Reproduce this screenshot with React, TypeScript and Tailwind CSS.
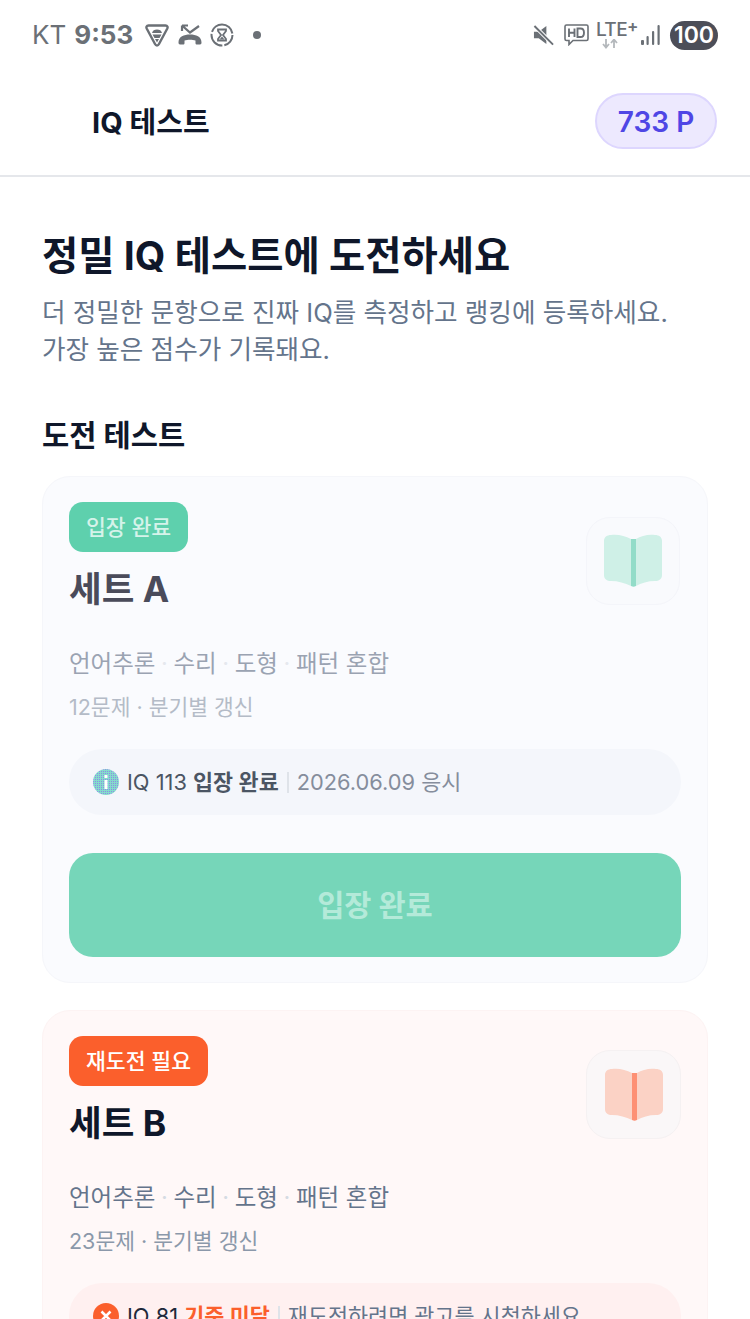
const font = { fontFamily: '"Inter", "Noto Sans CJK KR", sans-serif' }

const BookIcon = ({ page, spine }: { page: string; spine: string }) => (
  <svg width="58" height="54" viewBox="0 0 58 54">
    <path
      d="M7 1 C14 0 21 2 27 5 L27 52 C21 49 14 47 7 47 C3 47 0 45 0 41 L0 7 C0 3 3 1 7 1 Z"
      fill={page}
    />
    <path
      d="M51 1 C44 0 37 2 32 5 L32 52 C37 49 44 47 51 47 C55 47 58 45 58 41 L58 7 C58 3 55 1 51 1 Z"
      fill={page}
    />
    <path d="M27 5 L32 5 L32 52 C30 53 29 53 27 52 Z" fill={spine} />
  </svg>
)

const Dot = ({ color }: { color: string }) => <span className={`${color} mx-[-1px]`}>·</span>

const StatusBar = () => (
  <div className="h-[70px] flex items-center justify-between pl-[32px] pr-[32px] text-[#6b7076]">
    <div className="flex items-center">
      <span className="text-[26px] leading-none">KT</span>
      <span className="text-[26px] leading-none font-bold ml-[8px]">9:53</span>
      {/* vpn shield */}
      <svg className="ml-[12px]" width="24" height="23" viewBox="0 0 24 23" fill="none">
        <path d="M3.5 1.5 H20.5 C22.5 1.5 23 3 22.3 4.5 L14 20 C13 22 11 22 10 20 L1.7 4.5 C1 3 1.5 1.5 3.5 1.5 Z" stroke="#6b7076" strokeWidth="2.4" />
        <path d="M7 9 C7.5 6.5 9.5 5.5 12 5.5 C14.5 5.5 16.5 6.5 17 9 Z M7.5 10.5 H16.5 L14.5 14 H9.5 Z M10 15 H14 L12 18.5 Z" fill="#6b7076" />
      </svg>
      {/* missed call */}
      <svg className="ml-[9px]" width="24" height="22" viewBox="0 0 24 22" fill="none">
        <path d="M0.5 18.5 C0.5 12.5 6 10.5 12 10.5 C18 10.5 23.5 12.5 23.5 18.5 C23.5 19.5 23 20.5 22 20.5 H19 C18 20.5 17.5 20 17.5 19 V16.5 C14.5 15.4 9.5 15.4 6.5 16.5 V19 C6.5 20 6 20.5 5 20.5 H2 C1 20.5 0.5 19.5 0.5 18.5 Z" fill="#6b7076" />
        <path d="M4 1.5 L12 8.5 L21 2 M4 1.5 H10 M4 1.5 V7" stroke="#6b7076" strokeWidth="2.2" />
      </svg>
      {/* timer */}
      <svg className="ml-[8px]" width="24" height="24" viewBox="0 0 24 24" fill="none">
        <circle cx="12" cy="12" r="10.5" stroke="#6b7076" strokeWidth="2" strokeDasharray="14 2 18 2 28 2" />
        <path d="M8 6.5 H16 V8 L13 12 L16 16 V17.5 H8 V16 L11 12 L8 8 Z" stroke="#6b7076" strokeWidth="1.8" fill="none" />
        <path d="M9.5 16.5 L12 13.5 L14.5 16.5 Z" fill="#6b7076" />
      </svg>
      <div className="ml-[19px] w-[8px] h-[8px] rounded-full bg-[#6b7076]" />
    </div>
    <div className="flex items-center">
      {/* mute */}
      <svg width="21" height="21" viewBox="0 0 22 22" fill="none">
        <path d="M1 7 H6 L14 1 V20 L6 14 H1 Z" fill="#6b7076" />
        <path d="M2 1.5 L21 20.5" stroke="#ffffff" strokeWidth="4" />
        <path d="M1.5 1 L21 20.5" stroke="#6b7076" strokeWidth="2" />
      </svg>
      {/* HD bubble */}
      <svg className="ml-[10px]" width="25" height="22" viewBox="0 0 25 22" fill="none">
        <path d="M2.5 1 H22.5 C23.5 1 24 1.5 24 2.5 V15 C24 16 23.5 16.5 22.5 16.5 H9 L5 20.5 V16.5 H2.5 C1.5 16.5 1 16 1 15 V2.5 C1 1.5 1.5 1 2.5 1 Z" stroke="#6b7076" strokeWidth="1.6" />
        <path d="M5 4.5 V13 M10.5 4.5 V13 M5 8.7 H10.5 M13.5 4.5 V13 H16.5 C18.8 13 20 11.5 20 8.7 C20 6 18.8 4.5 16.5 4.5 Z" stroke="#6b7076" strokeWidth="1.9" />
      </svg>
      <div className="ml-[7px] w-[38px] flex flex-col items-start">
        <span className="text-[19px] leading-[18px] font-medium tracking-[-0.6px] whitespace-nowrap">LTE<span className="text-[17px] font-semibold relative top-[-4px]">+</span></span>
        <svg className="ml-[6px]" width="16" height="10" viewBox="0 0 16 10" fill="none">
          <path d="M4 0 V8 M1 5 L4 8.5 L7 5" stroke="#b4b8bc" strokeWidth="1.8" />
          <path d="M12 9 V1 M9 4 L12 0.5 L15 4" stroke="#b4b8bc" strokeWidth="1.8" />
        </svg>
      </div>
      {/* signal */}
      <svg className="ml-[7px]" width="19" height="20" viewBox="0 0 19 20" fill="#6b7076">
        <rect x="0" y="15" width="3" height="5" rx="1" />
        <rect x="5.5" y="11" width="2.2" height="9" rx="1" />
        <rect x="11" y="6" width="2.2" height="14" rx="1" />
        <rect x="16.5" y="0" width="2.2" height="20" rx="1" />
      </svg>
      <div className="ml-[10px] w-[48px] h-[29px] rounded-full bg-[#4c4e58] text-white text-[23px] font-semibold leading-none flex items-center justify-center">
        100
      </div>
    </div>
  </div>
)

const App = () => {
  return (
    <div style={font} className="w-[750px] h-[1319px] overflow-hidden bg-white">
      <StatusBar />

      <header className="h-[107px] pl-[92px] pr-[33px] flex items-center justify-between border-b-2 border-[#e5e7eb]">
        <span className="text-[29px] font-bold text-[#0f172a]">IQ 테스트</span>
        <div className="mb-[4px] pt-[3px] w-[122px] h-[56px] rounded-[28px] bg-[#ede9fe] border-2 border-[#ddd6fe] flex items-center justify-center text-[28px] font-semibold text-[#4f46e5]">
          733 P
        </div>
      </header>

      <main className="px-[42px] pt-[56px]">
        <h1 className="text-[39.4px] leading-[46px] font-bold text-[#0f172a]">정밀 IQ 테스트에 도전하세요</h1>
        <p className="mt-[15px] text-[25.6px] leading-[37px] text-[#64748b]">
          더 정밀한 문항으로 진짜 IQ를 측정하고 랭킹에 등록하세요.
          <br />
          가장 높은 점수가 기록돼요.
        </p>
        <h2 className="mt-[47px] text-[29.6px] leading-[40px] font-bold text-[#0f172a]">도전 테스트</h2>

        {/* Set A */}
        <section className="mt-[21px] h-[507px] rounded-[28px] bg-[#fafbfe] border border-[#f5f6fa] px-[26px] pt-[25px]">
          <div className="flex justify-between">
            <div>
              <span className="inline-flex items-center h-[50px] px-[17px] rounded-[14px] bg-[#5ed0ad] text-[21.6px] font-medium text-[#d5f3ea]">입장 완료</span>
              <div className="mt-[15px] text-[35.5px] leading-[46px] font-bold text-[#4a4b5a]">세트 A</div>
            </div>
            <div className="mt-[15px] mr-[1px] w-[94px] h-[88px] rounded-[24px] bg-[#f9fafd] border border-[#f4f5fa] flex items-center justify-center">
              <BookIcon page="#cff0e7" spine="#92dcc8" />
            </div>
          </div>
          <p className="mt-[34px] text-[23.5px] leading-[34px] text-[#9aa3b2]">
            언어추론 <Dot color="text-[#e5e8ee]" /> 수리 <Dot color="text-[#e5e8ee]" /> 도형 <Dot color="text-[#e5e8ee]" /> 패턴 혼합
          </p>
          <p className="mt-[11px] text-[21.5px] leading-[30px] text-[#b4bbc7]">12문제 · 분기별 갱신</p>
          <div className="mt-[27px] h-[66px] rounded-[33px] bg-[#f4f6fb] pl-[24px] flex items-center text-[21.8px]">
            <svg width="26" height="26" viewBox="0 0 26 26">
              <defs>
                <pattern id="info-dither" width="2" height="2" patternUnits="userSpaceOnUse">
                  <rect width="2" height="2" fill="#84dccb" />
                  <rect width="1" height="1" fill="#8c8ce6" />
                </pattern>
              </defs>
              <circle cx="13" cy="13" r="13" fill="url(#info-dither)" />
              <rect x="11.5" y="11" width="3" height="9" fill="#ffffff" />
              <rect x="11.5" y="6" width="3" height="3" fill="#ffffff" />
            </svg>
            <span className="ml-[8px] text-[#4b5563]">IQ 113 <span className="font-semibold">입장 완료</span></span>
            <span className="mx-[8px] w-[2px] h-[21px] bg-[#dfe3e9]" />
            <span className="text-[#858d9c]">2026.06.09 응시</span>
          </div>
          <div className="mt-[38px] h-[104px] rounded-[24px] bg-[#76d6b9] flex items-center justify-center text-[29.5px] font-bold text-[#b4ead9]">
            입장 완료
          </div>
        </section>

        {/* Set B, cut off by the window */}
        <section className="mt-[27px] h-[507px] rounded-[28px] bg-[#fff8f8] border border-[#fdf3f3] px-[26px] pt-[25px]">
          <div className="flex justify-between">
            <div>
              <span className="inline-flex items-center h-[50px] px-[17px] rounded-[14px] bg-[#fb5f2c] text-[21.6px] font-medium text-white">재도전 필요</span>
              <div className="mt-[15px] text-[35.5px] leading-[46px] font-bold text-[#0f172a]">세트 B</div>
            </div>
            <div className="mt-[14px] w-[95px] h-[89px] rounded-[24px] bg-[#faf7f8] border border-[#f5f1f2] flex items-center justify-center">
              <BookIcon page="#fbd2c5" spine="#fd9074" />
            </div>
          </div>
          <p className="mt-[34px] text-[23.5px] leading-[34px] text-[#64748b]">
            언어추론 <Dot color="text-[#d5dbe3]" /> 수리 <Dot color="text-[#d5dbe3]" /> 도형 <Dot color="text-[#d5dbe3]" /> 패턴 혼합
          </p>
          <p className="mt-[11px] text-[21.5px] leading-[30px] text-[#8b98aa]">23문제 · 분기별 갱신</p>
          <div className="mt-[27px] h-[66px] rounded-[33px] bg-[#fff0f0] pl-[24px] flex items-center text-[21.8px]">
            <svg width="26" height="26" viewBox="0 0 26 26">
              <circle cx="13" cy="13" r="13" fill="#fb5f2c" />
              <path d="M8.5 8.5 L17.5 17.5 M17.5 8.5 L8.5 17.5" stroke="#ffffff" strokeWidth="2.6" />
            </svg>
            <span className="ml-[8px] text-[#1e293b]">IQ 81 <span className="font-semibold text-[#fb5f2c]">기준 미달</span></span>
            <span className="mx-[8px] w-[2px] h-[21px] bg-[#dfe3e9]" />
            <span className="text-[#64748b]">재도전하려면 광고를 시청하세요</span>
          </div>
        </section>
      </main>
    </div>
  )
}

export default App
